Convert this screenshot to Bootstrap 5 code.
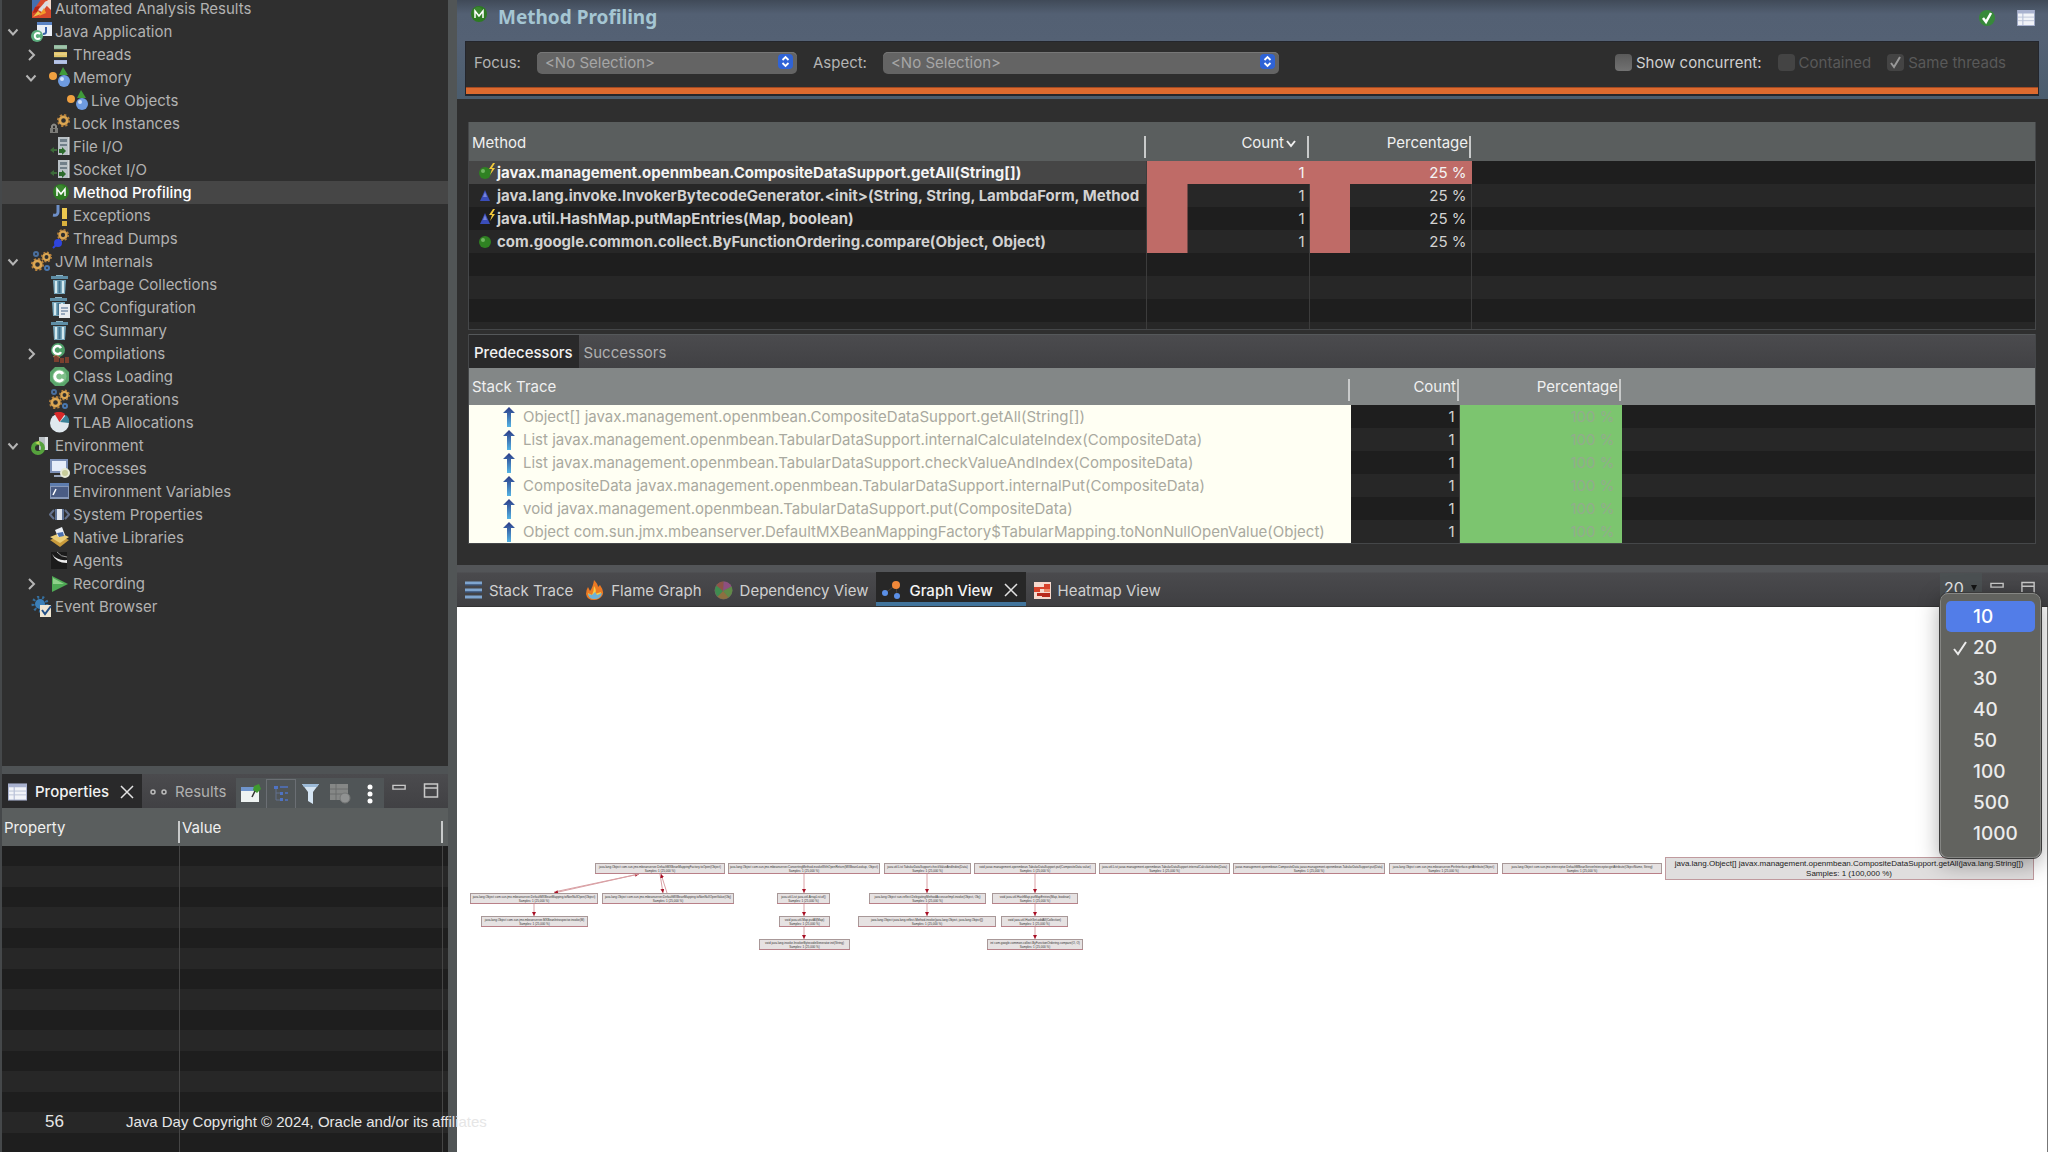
<!DOCTYPE html>
<html lang="en" data-bs-theme="dark">
<head>
<meta charset="utf-8">
<meta name="viewport" content="width=device-width, initial-scale=1">
<title>Method Profiling</title>
<link href="https://cdn.jsdelivr.net/npm/bootstrap@5.3.0/dist/css/bootstrap.min.css" rel="stylesheet">
<style>
  body { font-family: Inter, "Liberation Sans", sans-serif; font-size: 15px; line-height: 23px; background: #515556; color: #b4b4b4; }
  svg { display: block; flex: none; }
  a, a:hover { color: inherit; text-decoration: none; }
  button { background: none; border: 0; padding: 0; color: inherit; }
  .ico { width: 21px; height: 21px; }

  /* left column */
  .side { width: 457px; flex: none; border-right: 9px solid #515556; border-left: 2px solid #45484a; }
  .outline { background: #2f2f2f; overflow: hidden; }
  .outline ul { margin-top: -3px; }
  .tree-row { height: 23px; padding-left: 4px; color: #b2b2b2; }
  .tree-row .twist { width: 14px; height: 14px; margin-right: 11px; flex: none; }
  .tree-row .ico { margin-right: 3px; }
  .lv1 { padding-left: 22px; }
  .lv2 { padding-left: 40px; }
  .tree-row.current { background: #464646; color: #fff; font-weight: 500; }
  .props { height: 386px; flex: none; border-top: 8px solid #4f5355; }
  .viewbar { height: 34px; background: linear-gradient(#4b4b4e, #414144); }
  .viewtab { color: #b0b0b0; }
  .viewtab.on { background: #29292a; color: #f2f2f2; font-weight: 500; }
  .props .viewtab { padding-top: 1px; }
  .props .viewtab.on { width: 140px; padding-left: 6px; }
  .props .tools { background: #505557; width: 148px; height: 31px; }
  .boxed { border: 1px solid #6b6f74; width: 30px; height: 30px; }

  /* tables */
  .sheet { --bs-table-bg: transparent; table-layout: fixed; margin: 0; color: #d2d2d2; }
  .sheet > :not(caption) > * > * { padding: 0 4px; border: 0; box-shadow: none; height: 23px; line-height: 23px; white-space: nowrap; overflow: hidden; color: inherit; }
  .sheet > thead > tr > th { font-weight: 400; color: #f0f0f0; background: linear-gradient(#c8caca, #c8caca) right 3px / 2px 22px no-repeat; }
  .sheet > thead > tr > th:last-child { background: none; }
  .sheet > tbody > tr > td { border-right: 1px solid #3c3c3c; }
  .sheet > tbody > tr > td:last-child { border-right: 0; }
  .sheet > tbody > tr:nth-child(odd) { background: #1e1e1e; }
  .sheet > tbody > tr:nth-child(even) { background: #272727; }
  .frame-box { border: 1px solid #454749; border-top: 0; }
  .methods > thead { background: #5a5e5e; }
  .methods > thead > tr > th { height: 39px; line-height: 37px; padding: 2px 3px 0; background-position: right 14px; }
  .methods > tbody > tr > td:first-child { font-weight: 700; padding-left: 10px; padding-right: 0; }
  .methods > tbody > tr.sel > td:first-child { background: #464646; color: #f4f4f4; }
  .methods > tbody > tr.part > td { height: 7px; line-height: 7px; }
  .methods td.share { background: linear-gradient(#bf6b67, #bf6b67) left / 25% 100% no-repeat; }
  .methods tr.sel td.share { background-size: 100% 100%; border-color: #bf6b67; color: #f4f4f4; }
  .traces > thead { background: #838787; }
  .traces > thead > tr > th { height: 37px; line-height: 37px; padding: 0 3px; background-position: right 11px; }
  .traces td.call { background: #fffff3; color: #a9a99f; padding-left: 34px; border-color: #fffff3; }
  .traces td.full { background: #7cc56f; color: #93ac8d; border-color: #7cc56f; padding-right: 6px; }

  .props .sheet > thead { background: #5a5e5e; }
  .props .sheet > thead > tr > th { height: 38px; line-height: 36px; padding: 2px 3px 0 2px; background-position: right 13px; }
  .stripes { background: repeating-linear-gradient(#1e1e1e 0 20px, #272727 20px 41px); }
  .stripes div { border-right: 1px solid #454545; }
  .c-prop { width: 178px; }
  .c-val { width: 263px; }

  /* form header */
  .formhead { background: linear-gradient(#404a58, #536073 14px, #546174 41px, #4b5d6e); padding: 0 9px 3px 8px; height: 99px; flex: none; }
  .formhead h1 { font: 700 19px/34px "Noto Sans", "Open Sans", sans-serif; color: #a5c6d3; margin: 0; }
  .titlebar { height: 41px; }
  .filterbar { background: #2e2e2e; height: 55px; border: 1px solid #24262c; border-width: 1px 1px 2px; }
  .accent-line { height: 7px; background: #dc6a2f; border-top: 1px solid #a34a22; }
  .pick { appearance: none; height: 22px; border: 0; border-radius: 5px; background: #646464; color: #a6a6a6; padding: 0 8px; line-height: 22px; box-shadow: 0 1px #777 inset; }
  .pick-wrap { position: relative; }
  .pick-wrap svg { position: absolute; right: 3px; top: 3px; pointer-events: none; }
  .w-focus { width: 260px; }
  .w-aspect { width: 396px; }
  .tick { appearance: none; width: 17px; height: 17px; border-radius: 4px; background: linear-gradient(#5a5a5a, #727272); margin: 0; }
  .tick:disabled { background: #444; }
  .tick:checked { background: #444 url("data:image/svg+xml,%3Csvg xmlns='http://www.w3.org/2000/svg' viewBox='0 0 17 17'%3E%3Cpath d='M4 9l3 4 6-10' fill='none' stroke='%23999' stroke-width='2'/%3E%3C/svg%3E") no-repeat; }
  .lit { color: #d0d0d0; }
  .dim { color: #595959; }

  .page-area { background: #2f2f2f; padding: 23px 12px 21px 11px; flex: none; }
  .folder { margin-top: 4px; }
  .folder .viewbar { border-top: 1px solid #55585a; }
  .folder .viewtab { padding: 1px 6px 0 5px; line-height: 33px; }

  /* bottom part */
  .lowbar { height: 42px; flex: none; background: linear-gradient(#535558 0 7px, #4a4a4d 8px, #3f3f42); border-bottom: 1px solid #333; }
  .lowtab { height: 34px; color: #d0d0d0; gap: 7px; padding-top: 2px; }
  .lowtab.on { background: #272727; color: #f4f4f4; font-weight: 500; box-shadow: inset 0 -4px #41749c; padding: 2px 8px 0 6px; }
  .canvas { background: #fff; border-right: 1px solid #777; min-height: 0; }
  .depth { width: 42px; height: 30px; background: #4b5052; color: #e6e6e6; line-height: 30px; font-size: 16px; }
  .depth-menu { position: absolute; right: 7px; top: 28px; z-index: 5; width: 101px; padding: 7px 5px 8px; background: #62635f; border: 1px solid #858683; outline: 1px solid #3a3a3a; border-radius: 8px; box-shadow: 0 6px 22px rgba(0,0,0,.35); }
  .depth-menu button { display: flex; align-items: center; width: 100%; height: 31px; border-radius: 5px; color: #ececec; font-size: 19px; font-weight: 500; padding-left: 6px; }
  .depth-menu button svg, .depth-menu button i { width: 16px; margin-right: 5px; }
  .depth-menu button.hot { background: #527de8; color: #fff; }

  .slide-foot { position: absolute; left: 45px; bottom: 17px; z-index: 6; gap: 62px; font: 15px/26px "Liberation Sans", Arial, sans-serif; color: #e6e6e6; }
  .slide-foot b { font-weight: 400; font-size: 17px; }
</style>
</head>
<body class="vh-100 overflow-hidden d-flex position-relative">

<svg width="0" height="0" class="position-absolute">
  <defs>
    <symbol id="open" viewBox="0 0 14 14"><path d="M2.500 4.500l4.500 5 4.500-5" fill="none" stroke="#b5b5b5" stroke-width="2"/></symbol>
    <symbol id="sort" viewBox="0 0 12 14"><path d="M2 5l4 5 4-5" fill="none" stroke="#f0f0f0" stroke-width="2"/></symbol>
    <symbol id="shut" viewBox="0 0 14 14"><path d="M5 2l5 5-5 5" fill="none" stroke="#b5b5b5" stroke-width="2"/></symbol>
    <symbol id="auto" viewBox="0 0 21 21"><path d="M1 0h19v20H1z" fill="#d8492c"/><path d="M1 0h10L1 14z" fill="#456fb0"/><path d="M13 5l7-5v12z" fill="#f4d9c9"/><path d="M7 12L15 3l3 2-7 9z" fill="#d9dde2"/><path d="M4 9l5-1-3 6-4 1z" fill="#b32317"/><path d="M8 18l5-8 2 5z" fill="#f59a2a"/><path d="M2 19l5-6 3 3z" fill="#f0c34a"/></symbol>
    <symbol id="japp" viewBox="0 0 21 21"><path d="M6 1h15v14H6z" fill="#e9eef6"/><path d="M6 1h15v3H6z" fill="#5a83c4"/><path d="M15 6v5q0 2-3 2" fill="none" stroke="#3a62a8" stroke-width="2"/><circle cx="6" cy="15" r="6" fill="#5cae7e"/><path d="M9 13a3 3 0 1 0 0 4" fill="none" stroke="#fff" stroke-width="2"/></symbol>
    <symbol id="threads" viewBox="0 0 21 21"><path d="M5 1h13v4H5z" fill="#8db79a"/><path d="M5 8h13v5H5z" fill="#e3c66a"/><path d="M5 16h13v4H5z" fill="#a9b9e0"/><path d="M5 5h13v1H5zM5 13h13v1H5z" fill="#4a5040"/><path d="M5 3h13M5 10h13M5 18h13" stroke="#fff" opacity=".35"/></symbol>
    <symbol id="memory" viewBox="0 0 21 21"><circle cx="4" cy="9" r="4" fill="#f0a040"/><path d="M14 0l5 8h-9z" fill="#3f9a3a"/><circle cx="15" cy="14" r="6" fill="#6e9be0"/><circle cx="13" cy="12" r="2" fill="#cfe0fa"/></symbol>
    <symbol id="cog" viewBox="0 0 14 14"><circle cx="7" cy="7" r="4" fill="none" stroke="#dba753" stroke-width="3"/><circle cx="7" cy="7" r="6" fill="none" stroke="#b9833c" stroke-width="2" stroke-dasharray="2.400 2.300"/></symbol>
    <symbol id="lock" viewBox="0 0 21 21"><use href="#cog" x="8" y="1" width="13" height="13"/><path d="M1 15h8v5H1z" fill="#7c7c78"/><path d="M3 15v-2q2-3 4 0v2" fill="none" stroke="#8a8a86" stroke-width="2"/><path d="M4 16h2v3H4z" fill="#333"/></symbol>
    <symbol id="io" viewBox="0 0 21 21"><path d="M9 1h11v18H9z" fill="#b9c1c6"/><path d="M11 3h7v3h-7zM11 8h7v2h-7z" fill="#71808a"/><path d="M20 1v18" stroke="#e8e8e8"/><path d="M1 14l4-3v2h3v2H5v2z" fill="#3d6b3a"/><path d="M17 15l-4-4v2h-3v4h3v2z" fill="#2c6a2c"/></symbol>
    <symbol id="mball" viewBox="0 0 21 21"><circle cx="12" cy="10" r="8" fill="#2d7b22"/><circle cx="11" cy="8" r="5" fill="#4b9440" opacity=".5"/><path d="M8 14V7l4 5 4-5v7" fill="none" stroke="#fff" stroke-width="1.500"/></symbol>
    <symbol id="exc" viewBox="0 0 21 21"><path d="M9 0v7q0 4-5 3" fill="none" stroke="#6d8fc8" stroke-width="3"/><path d="M13 3h5v11h-5z" fill="#edc94f"/><path d="M13 16h5v5h-5z" fill="#d9b13d"/></symbol>
    <symbol id="dumps" viewBox="0 0 21 21"><use href="#cog" x="8" y="1" width="12" height="12"/><circle cx="9" cy="15" r="4" fill="#2f45dd"/><path d="M4 20l4-4" stroke="#2f45dd" stroke-width="2"/></symbol>
    <symbol id="gears" viewBox="0 0 21 21"><use href="#cog" x="10" y="0" width="11" height="12"/><use href="#cog" x="0" y="7" width="13" height="13"/><circle cx="5" cy="3" r="2" fill="none" stroke="#4a6f9e" stroke-width="2"/><circle cx="16" cy="17" r="2" fill="none" stroke="#4a78b0" stroke-width="2"/></symbol>
    <symbol id="bin" viewBox="0 0 21 21"><path d="M2 2h17v3H2z" fill="#5e8ea6"/><path d="M7 1h7v1H7z" fill="#8fb6c6"/><path d="M4 6h13l-1 14H5z" fill="#76a5ba"/><path d="M7 7v12M14 7v12" stroke="#d3e8ee" stroke-width="2"/><path d="M10.500 7v12" stroke="#3e6f8c" stroke-width="2"/></symbol>
    <symbol id="binpage" viewBox="0 0 21 21"><use href="#bin" x="-1" y="-1" width="21" height="21"/><path d="M10 7h11v14H10z" fill="#e9ecef"/><path d="M12 11h7M12 14h7M12 17h4" stroke="#7d93ad" stroke-width="1.500"/></symbol>
    <symbol id="comp" viewBox="0 0 21 21"><circle cx="9" cy="7" r="7" fill="#4f9f68"/><path d="M12 5a4 4 0 1 0 0 4" fill="none" stroke="#fff" stroke-width="2.500"/><path d="M5 13h5v6H5zM11 15h4v5h-4zM16 14h4v6h-4z" fill="#7c3f2e"/><path d="M4 14l3-2 4 3" stroke="#b07a4e" fill="none"/></symbol>
    <symbol id="cls" viewBox="0 0 21 21"><path d="M6 1h9l5 5v9l-5 5H6l-5-5V6z" fill="#5aa56b"/><circle cx="10.500" cy="10.500" r="7" fill="#7fbf8a"/><path d="M14 8a4.500 4.500 0 1 0 0 5" fill="none" stroke="#fff" stroke-width="3"/></symbol>
    <symbol id="pie" viewBox="0 0 21 21"><circle cx="10.500" cy="11" r="9.500" fill="#dfe8ee"/><path d="M10.500 10L5 1q6-3 11 1z" fill="#d92a2a"/><path d="M11 10l6-7q4 3 3 8z" fill="#3a8298"/></symbol>
    <symbol id="env" viewBox="0 0 21 21"><path d="M8 2h9v13H8z" fill="#b8bfc4"/><path d="M14 2h3v13h-3z" fill="#dfe3e6"/><circle cx="7" cy="13" r="5" fill="none" stroke="#56a23d" stroke-width="4"/><path d="M4 8l4-2 1 4z" fill="#b9d25a"/></symbol>
    <symbol id="proc" viewBox="0 0 21 21"><path d="M1 1h18v14H1z" fill="#7c90b8"/><path d="M3 3h14v10H3z" fill="#e6edfa"/><path d="M5 17h10v2H5z" fill="#9aa7bd"/><circle cx="16" cy="15" r="4" fill="#c9ce9b" stroke="#e8ebd6" stroke-width="2"/></symbol>
    <symbol id="vars" viewBox="0 0 21 21"><path d="M1 2h19v16H1z" fill="#8798b8"/><path d="M2 6h17v10H2z" fill="#4a5c84"/><path d="M4 14l3-6" stroke="#fff" stroke-width="1.500"/><path d="M1 2h19v3H1z" fill="#5d7cae"/></symbol>
    <symbol id="sysp" viewBox="0 0 21 21"><path d="M5 6l-4 4.500L5 15M16 6l4 4.500-4 4.500" fill="none" stroke="#62708c" stroke-width="2"/><path d="M6 5h9v11H6z" fill="#5f7396"/><path d="M8 5h5v11H8z" fill="#e3e8f0"/></symbol>
    <symbol id="libs" viewBox="0 0 21 21"><path d="M1 13l10-4 9 4-9 7z" fill="#c99b3c"/><path d="M1 10l10-4 9 4-9 6z" fill="#ebce78"/><path d="M6 3l7-3 3 8-7 2z" fill="#edf1f7"/><path d="M8 6l6-1 1 4-5 1z" fill="#4a70b0"/></symbol>
    <symbol id="agent" viewBox="0 0 21 21"><path d="M2 2h16v17H2z" fill="#1b1b1b"/><path d="M3 4q4 9 15 9v-3Q8 11 3 4z" fill="#eee"/><path d="M8 2q4 5 10 5" stroke="#999" fill="none"/></symbol>
    <symbol id="rec" viewBox="0 0 21 21"><path d="M3 3l16 8-16 8z" fill="#4faa55"/><path d="M4 5l11 6H4z" fill="#8fd08a"/></symbol>
    <symbol id="evt" viewBox="0 0 21 21"><circle cx="9" cy="8" r="5" fill="#3b7fb8"/><circle cx="9" cy="8" r="7" fill="none" stroke="#356f9f" stroke-width="3" stroke-dasharray="2 3"/><path d="M9 9h11v12H9z" fill="#efe6d3"/><path d="M11 14l3 4 6-8" fill="none" stroke="#234f86" stroke-width="2"/></symbol>
    <symbol id="ball" viewBox="0 0 21 21"><circle cx="9" cy="11" r="6" fill="#2f8122"/><circle cx="7" cy="9" r="2" fill="#6fb560"/></symbol>
    <symbol id="tri" viewBox="0 0 21 21"><path d="M9 5l5 11H4z" fill="#3a4dba"/><path d="M9 7l2 5H7z" fill="#7684da"/></symbol>
    <symbol id="bolt" viewBox="0 0 21 21"><path d="M17 1l-4 6h3l-2 6 5-7h-3l3-5z" fill="#f2c93a"/></symbol>
    <symbol id="cross" viewBox="0 0 14 14"><path d="M1 1l12 12M13 1L1 13" stroke="#e2e2e2" stroke-width="1.500"/></symbol>
    <symbol id="mini" viewBox="0 0 16 16"><path d="M1 2h13v4H1z" fill="none" stroke="#c9c9c9" stroke-width="1.500"/></symbol>
    <symbol id="maxi" viewBox="0 0 16 16"><path d="M1 1h13v13H1zM1 5h13" fill="none" stroke="#c9c9c9" stroke-width="1.500"/></symbol>
    <symbol id="grid" viewBox="0 0 20 18"><path d="M0 0h20v18H0z" fill="#a9b2cf"/><path d="M1 4h5v13H1zM7 4h12v13H7z" fill="#f1f3f8"/><path d="M1 8h18M1 12h18" stroke="#b9c2d6"/></symbol>
    <linearGradient id="upg" x1="0" y1="0" x2="0" y2="1"><stop offset="0" stop-color="#2b3a86"/><stop offset="1" stop-color="#55b4e4"/></linearGradient>
    <symbol id="up" viewBox="0 0 12 20"><path d="M6 0l6 6H8v14H4V6H0z" fill="url(#upg)"/></symbol>
    <symbol id="steps" viewBox="0 0 16 16"><rect width="15" height="15" rx="4" fill="#2f63d6"/><path d="M4.500 6l3-3 3 3M4.500 9l3 3 3-3" fill="none" stroke="#fff" stroke-width="1.800"/></symbol>
  </defs>
</svg>

<aside class="side d-flex flex-column">
  <nav class="outline flex-grow-1" aria-label="Outline">
    <ul class="list-unstyled mb-0" id="outline"></ul>
  </nav>
  <section class="props d-flex flex-column">
    <div class="viewbar d-flex align-items-stretch">
      <div class="viewtab on d-flex align-items-center">
        <svg width="19" height="18"><use href="#grid"/></svg>
        <a href="#" class="ms-2 me-auto">Properties</a>
        <button aria-label="Close Properties" class="me-2"><svg width="14" height="14"><use href="#cross"/></svg></button>
      </div>
      <div class="viewtab d-flex align-items-center ps-2 me-auto">
        <svg width="17" height="8" viewBox="0 0 17 8"><circle cx="3" cy="4" r="2" fill="none" stroke="#bbb" stroke-width="1.500"/><circle cx="14" cy="4" r="2" fill="none" stroke="#bbb" stroke-width="1.500"/></svg>
        <a href="#" class="ms-2">Results</a>
      </div>
      <div class="tools d-flex align-items-center mt-1 ps-1">
        <button aria-label="Pin"><svg width="22" height="22" viewBox="0 0 22 22"><path d="M1 4h18v15H1z" fill="#eef3f2"/><path d="M1 4h18v4H1z" fill="#6f95cc"/><path d="M14 3l5-2 2 5-4 4-4-3z" fill="#3f9a2f"/><path d="M15 8l-3 6" stroke="#333" stroke-width="1.500"/></svg></button>
        <button aria-label="Categories" class="boxed d-flex align-items-center justify-content-center ms-1"><svg width="18" height="18" viewBox="0 0 18 18"><path d="M4 3v12M4 8h5M4 15h5" stroke="#60708f" fill="none"/><path d="M2 1h4v3H2zM8 7h3v3H8zM8 13h3v3H8z" fill="#4f73c4"/><path d="M8 2h8M13 8h3M13 15h3" stroke="#4f73c4" stroke-width="1.500"/></svg></button>
        <button aria-label="Filter" class="ms-1"><svg width="21" height="22" viewBox="0 0 21 22"><path d="M2 1h17l-6 8v12l-5-3V9z" fill="#d5e5f3"/><path d="M2 1h17l-2 3H4z" fill="#9dbbd8"/></svg></button>
        <button aria-label="Restore defaults" class="ms-2"><svg width="22" height="21" viewBox="0 0 22 21"><path d="M1 1h18v16H1z" fill="#858786"/><path d="M1 6h18M1 11h18M7 1v16" stroke="#6b6d6d"/><circle cx="16" cy="15" r="5" fill="#909292" stroke="#747676"/></svg></button>
        <button aria-label="View menu" class="ms-3"><svg width="6" height="22" viewBox="0 0 6 22"><circle cx="3" cy="4" r="2.500" fill="#fff"/><circle cx="3" cy="11" r="2.500" fill="#fff"/><circle cx="3" cy="18" r="2.500" fill="#fff"/></svg></button>
      </div>
      <div class="d-flex align-items-center ps-2 pe-2 gap-3">
        <button aria-label="Minimize"><svg width="15" height="16"><use href="#mini"/></svg></button>
        <button aria-label="Maximize"><svg width="17" height="16"><use href="#maxi"/></svg></button>
      </div>
    </div>
    <table class="table sheet">
      <colgroup><col class="c-prop"><col class="c-val"><col></colgroup>
      <thead><tr><th scope="col">Property</th><th scope="col">Value</th><th></th></tr></thead>
    </table>
    <div class="stripes d-flex flex-grow-1"><div class="c-prop"></div><div class="c-val"></div></div>
  </section>
</aside>

<main class="flex-grow-1 d-flex flex-column overflow-hidden">
  <header class="formhead">
    <div class="titlebar d-flex align-items-start">
      <svg class="ico ms-1 mt-1" width="21" height="21" viewBox="2 0 21 21"><use href="#mball" width="21" height="21"/></svg>
      <h1 class="ms-1 ps-1 me-auto">Method Profiling</h1>
      <div class="d-flex align-items-center pt-2 gap-3">
        <svg width="20" height="20" viewBox="0 0 20 20"><circle cx="10" cy="10" r="8" fill="#37893a"/><path d="M6 10l3 4 5-9" fill="none" stroke="#fff" stroke-width="2.500"/></svg>
        <button aria-label="Table settings" class="ms-1 me-1"><svg width="18" height="16"><use href="#grid"/></svg></button>
      </div>
    </div>
    <div class="filterbar d-flex flex-column">
      <div class="d-flex align-items-center flex-grow-1 px-2 pb-1">
        <label for="focus" class="me-3">Focus:</label>
        <div class="pick-wrap me-3"><select id="focus" class="pick w-focus"><option>&lt;No Selection&gt;</option></select><svg width="16" height="16"><use href="#steps"/></svg></div>
        <label for="aspect" class="me-3">Aspect:</label>
        <div class="pick-wrap me-auto"><select id="aspect" class="pick w-aspect"><option>&lt;No Selection&gt;</option></select><svg width="16" height="16"><use href="#steps"/></svg></div>
        <div class="d-flex align-items-center gap-3 pe-4">
          <span class="d-flex align-items-center lit"><input type="checkbox" class="tick me-1" id="conc"><label for="conc">Show concurrent:</label></span>
          <span class="d-flex align-items-center dim"><input type="checkbox" class="tick me-1" id="cont" disabled><label for="cont">Contained</label></span>
          <span class="d-flex align-items-center dim"><input type="checkbox" class="tick me-1" id="same" disabled checked><label for="same">Same threads</label></span>
        </div>
      </div>
      <div class="accent-line"></div>
    </div>
  </header>

  <section class="page-area">
    <div class="frame-box">
      <table class="table sheet methods">
        <colgroup><col style="width:677px"><col style="width:163px"><col style="width:162px"><col></colgroup>
        <thead><tr><th scope="col">Method</th><th scope="col" class="text-end"><span class="d-inline-flex align-items-center">Count<svg class="me-2" width="14" height="14"><use href="#sort"/></svg></span></th><th scope="col" class="text-end">Percentage</th><th></th></tr></thead>
        <tbody>
          <tr class="sel"><td><span class="d-flex align-items-center"><svg width="18" height="21" viewBox="3 0 18 21"><use href="#ball" width="21" height="21"/><use href="#bolt" width="21" height="21"/></svg>javax.management.openmbean.CompositeDataSupport.getAll(String[])</span></td><td class="share text-end">1</td><td class="share text-end">25 %</td><td></td></tr>
          <tr><td><span class="d-flex align-items-center"><svg width="18" height="21" viewBox="3 0 18 21"><use href="#tri" width="21" height="21"/></svg>java.lang.invoke.InvokerBytecodeGenerator.&lt;init&gt;(String, String, LambdaForm, Method</span></td><td class="share text-end">1</td><td class="share text-end">25 %</td><td></td></tr>
          <tr><td><span class="d-flex align-items-center"><svg width="18" height="21" viewBox="3 0 18 21"><use href="#tri" width="21" height="21"/><use href="#bolt" width="21" height="21"/></svg>java.util.HashMap.putMapEntries(Map, boolean)</span></td><td class="share text-end">1</td><td class="share text-end">25 %</td><td></td></tr>
          <tr><td><span class="d-flex align-items-center"><svg width="18" height="21" viewBox="3 0 18 21"><use href="#ball" width="21" height="21"/></svg>com.google.common.collect.ByFunctionOrdering.compare(Object, Object)</span></td><td class="share text-end">1</td><td class="share text-end">25 %</td><td></td></tr>
          <tr><td></td><td></td><td></td><td></td></tr>
          <tr><td></td><td></td><td></td><td></td></tr>
          <tr><td></td><td></td><td></td><td></td></tr>
          <tr class="part"><td></td><td></td><td></td><td></td></tr>
        </tbody>
      </table>
    </div>
    <div class="folder frame-box">
      <div class="viewbar d-flex">
        <a href="#" class="viewtab on">Predecessors</a>
        <a href="#" class="viewtab">Successors</a>
      </div>
      <table class="table sheet traces">
        <colgroup><col style="width:881px"><col style="width:109px"><col style="width:162px"><col></colgroup>
        <thead><tr><th scope="col">Stack Trace</th><th scope="col" class="text-end">Count</th><th scope="col" class="text-end">Percentage</th><th></th></tr></thead>
        <tbody id="traces"></tbody>
      </table>
    </div>
  </section>

  <section class="d-flex flex-column flex-grow-1 position-relative">
    <div class="lowbar d-flex align-items-end ps-2 gap-2">
      <a href="#" class="lowtab d-flex align-items-center me-1"><svg width="17" height="18" viewBox="0 0 17 18"><path d="M0 2h17M0 9h17M0 16h17" stroke="#7fa5cf" stroke-width="3"/><path d="M0 4h17M0 11h17" stroke="#37598a"/></svg>Stack Trace</a>
      <a href="#" class="lowtab d-flex align-items-center me-1"><svg width="19" height="20" viewBox="0 0 19 20"><path d="M9 0q4 4 4 7l2-2q5 7 2 11-3 4-8 4-7 0-8-6 0-4 2-7l2 4q3-4 4-11z" fill="#ec7a24"/><path d="M9 6q3 4 1 8l6-2q0 7-7 7-6-1-6-6l4 2q2-4 2-9z" fill="#f8cf45"/><path d="M3 14l4 1 3-3 2 3 5-2q-1 6-8 6-5 0-6-5z" fill="#6fb1d8"/></svg>Flame Graph</a>
      <a href="#" class="lowtab d-flex align-items-center"><svg width="19" height="19" viewBox="0 0 19 19"><circle cx="9.500" cy="9.500" r="9" fill="#6d6a5e"/><path d="M9.500.500a9 9 0 0 1 8 5L9 10z" fill="#8e4f80"/><path d="M17.500 5.500a9 9 0 0 1-3 11L9 10z" fill="#5f8a48"/><path d="M14.500 16.500a9 9 0 0 1-11-1L9 10z" fill="#8d7040"/><path d="M3.500 15.500a9 9 0 0 1-1-11L9 10z" fill="#3f8c50"/><path d="M2.500 4.500a9 9 0 0 1 7-4L9 10z" fill="#8f5348"/></svg>Dependency View</a>
      <div class="lowtab on d-flex align-items-center"><svg width="20" height="19" viewBox="0 0 20 19"><path d="M3 12l11-8 1 11" fill="none" stroke="#4a4035"/><circle cx="14" cy="4" r="4" fill="#f0883a"/><circle cx="3" cy="12" r="3" fill="#5b8fe6"/><circle cx="15" cy="15" r="3" fill="#5b8fe6"/></svg><a href="#">Graph View</a><button aria-label="Close Graph View" class="ms-1"><svg width="14" height="14"><use href="#cross"/></svg></button></div>
      <a href="#" class="lowtab d-flex align-items-center me-auto"><svg width="17" height="17" viewBox="0 0 17 17"><path d="M0 0h17v17H0z" fill="#f6d9cd"/><path d="M0 5h10V2h6v5H6v3H0z" fill="#d8432b"/><path d="M3 11h13v4H8v-1H3z" fill="#b82a1c"/><path d="M10 7h6v3h-6z" fill="#ef8a68"/></svg>Heatmap View</a>
      <button class="depth align-self-start mt-2 d-flex ps-1" aria-expanded="true" aria-haspopup="menu">20<svg class="ms-auto me-1 mt-2" width="8" height="14" viewBox="0 0 8 14"><path d="M1 4h6l-3 6z" fill="#141414"/></svg></button>
      <button aria-label="Minimize part" class="align-self-start mt-3"><svg width="15" height="16"><use href="#mini"/></svg></button>
      <button aria-label="Maximize part" class="align-self-start mt-3 ms-2 me-2"><svg class="me-1" width="15" height="16"><use href="#maxi"/></svg></button>
    </div>
    <div class="depth-menu" role="menu">
      <button class="hot" role="menuitem"><i></i>10</button>
      <button role="menuitem"><svg height="16" viewBox="0 0 16 16"><path d="M2 9l4 5 8-12" fill="none" stroke="#ececec" stroke-width="2"/></svg>20</button>
      <button role="menuitem"><i></i>30</button>
      <button role="menuitem"><i></i>40</button>
      <button role="menuitem"><i></i>50</button>
      <button role="menuitem"><i></i>100</button>
      <button role="menuitem"><i></i>500</button>
      <button role="menuitem"><i></i>1000</button>
    </div>
    <div class="canvas flex-grow-1">
      <svg id="graph" width="100%" height="100%" font-family="Liberation Sans, Arial, sans-serif" text-anchor="middle">
        <defs><marker id="tip" viewBox="0 0 6 6" refX="6" refY="3" markerWidth="4" markerHeight="4" orient="auto" markerUnits="userSpaceOnUse"><path d="M0 0l6 3-6 3z" fill="#a80f24"/></marker></defs>
      </svg>
    </div>
  </section>
</main>

<footer class="slide-foot d-flex align-items-center"><b>56</b><span>Java Day Copyright © 2024, Oracle and/or its affiliates</span></footer>

<script src="https://cdn.jsdelivr.net/npm/bootstrap@5.3.0/dist/js/bootstrap.bundle.min.js"></script>
<script>
  // outline tree: level, twistie, icon, label
  const items = [
    [0, '', 'auto', 'Automated Analysis Results'], [0, 'open', 'japp', 'Java Application'],
    [1, 'shut', 'threads', 'Threads'], [1, 'open', 'memory', 'Memory'], [2, '', 'memory', 'Live Objects'],
    [1, '', 'lock', 'Lock Instances'], [1, '', 'io', 'File I/O'], [1, '', 'io', 'Socket I/O'],
    [1, '', 'mball', 'Method Profiling'], [1, '', 'exc', 'Exceptions'], [1, '', 'dumps', 'Thread Dumps'],
    [0, 'open', 'gears', 'JVM Internals'], [1, '', 'bin', 'Garbage Collections'], [1, '', 'binpage', 'GC Configuration'],
    [1, '', 'bin', 'GC Summary'], [1, 'shut', 'comp', 'Compilations'], [1, '', 'cls', 'Class Loading'],
    [1, '', 'gears', 'VM Operations'], [1, '', 'pie', 'TLAB Allocations'], [0, 'open', 'env', 'Environment'],
    [1, '', 'proc', 'Processes'], [1, '', 'vars', 'Environment Variables'], [1, '', 'sysp', 'System Properties'],
    [1, '', 'libs', 'Native Libraries'], [1, '', 'agent', 'Agents'], [1, 'shut', 'rec', 'Recording'],
    [0, '', 'evt', 'Event Browser']
  ];
  document.getElementById('outline').innerHTML = items.map(([lv, tw, ic, label]) =>
    `<li><a href="#" class="tree-row lv${lv} d-flex align-items-center${label === 'Method Profiling' ? ' current' : ''}">` +
    `<svg class="twist">${tw ? `<use href="#${tw}"/>` : ''}</svg><svg class="ico"><use href="#${ic}"/></svg>${label}</a></li>`).join('');

  const frames = [
    'Object[] javax.management.openmbean.CompositeDataSupport.getAll(String[])',
    'List javax.management.openmbean.TabularDataSupport.internalCalculateIndex(CompositeData)',
    'List javax.management.openmbean.TabularDataSupport.checkValueAndIndex(CompositeData)',
    'CompositeData javax.management.openmbean.TabularDataSupport.internalPut(CompositeData)',
    'void javax.management.openmbean.TabularDataSupport.put(CompositeData)',
    'Object com.sun.jmx.mbeanserver.DefaultMXBeanMappingFactory$TabularMapping.toNonNullOpenValue(Object)'
  ];
  document.getElementById('traces').innerHTML = frames.map(f =>
    `<tr><td class="call"><span class="d-flex align-items-center"><svg class="me-2" width="12" height="20"><use href="#up"/></svg>${f}</span></td>` +
    `<td class="text-end">1</td><td class="full text-end">100 %</td><td></td></tr>`).join('');

  // call graph: x, y, width, label
  const nodes = [
    [138, 256, 130, 'java.lang.Object com.sun.jmx.mbeanserver.DefaultMXBeanMappingFactory.toOpen(Object)'],
    [271, 256, 152, 'java.lang.Object com.sun.jmx.mbeanserver.ConvertingMethod.invokeWithOpenReturn(MXBeanLookup, Object)'],
    [427, 256, 87, 'java.util.List TabularDataSupport.checkValueAndIndex(Data)'],
    [517, 256, 122, 'void javax.management.openmbean.TabularDataSupport.put(CompositeData value)'],
    [642, 256, 131, 'java.util.List javax.management.openmbean.TabularDataSupport.internalCalculateIndex(Data)'],
    [776, 256, 152, 'javax.management.openmbean.CompositeData javax.management.openmbean.TabularDataSupport.put(Data)'],
    [932, 256, 109, 'java.lang.Object com.sun.jmx.mbeanserver.PerInterface.getAttribute(Object)'],
    [1045, 256, 160, 'java.lang.Object com.sun.jmx.interceptor.DefaultMBeanServerInterceptor.getAttribute(ObjectName, String)'],
    [13, 286, 128, 'java.lang.Object com.sun.jmx.mbeanserver.DefaultMXBeanMapping.toNonNullOpen(Object)'],
    [145, 286, 132, 'java.lang.Object com.sun.jmx.mbeanserver.DefaultMXBeanMapping.toNonNullOpenValue(Obj)'],
    [320, 286, 53, 'java.util.List java.util.ArrayList.of()'],
    [412, 286, 117, 'java.lang.Object sun.reflect.DelegatingMethodAccessorImpl.invoke(Object, Obj)'],
    [535, 286, 86, 'void java.util.HashMap.putMapEntries(Map, boolean)'],
    [24, 309, 107, 'java.lang.Object com.sun.jmx.mbeanserver.MXBeanIntrospector.invoke(M)'],
    [322, 309, 51, 'void java.util.Map.putAll(Map)'],
    [401, 309, 138, 'java.lang.Object java.lang.reflect.Method.invoke(java.lang.Object, java.lang.Object[])'],
    [544, 309, 67, 'void java.util.HashSet.addAll(Collection)'],
    [302, 332, 91, 'void java.lang.invoke.InvokerBytecodeGenerator.init(String)'],
    [530, 332, 96, 'int com.google.common.collect.ByFunctionOrdering.compare(O, O)']
  ];
  const edges = [[97, 285, 182, 267], [182, 267, 97, 286], [203, 267, 206, 286], [210, 286, 204, 267], [77, 297, 77, 309],
    [347, 267, 347, 286], [347, 297, 347, 309], [347, 320, 347, 332], [470, 267, 470, 286], [470, 297, 470, 309],
    [578, 267, 578, 286], [578, 297, 578, 309], [578, 320, 578, 332]];
  let out = '';
  for (const [a, b, c, d] of edges) out += `<path d="M${a} ${b}L${c} ${d}" stroke="#d9a0a4" marker-end="url(#tip)"/>`;
  for (const [x, y, w, t] of nodes) {
    const m = x + w / 2;
    out += `<rect x="${x}.5" y="${y}.5" width="${w - 1}" height="10" fill="#e6e2e2" stroke="#a89898"/><path d="M${x} ${y + 10.5}h${w}" stroke="#b98088"/>` +
      `<text x="${m}" y="${y + 5}" font-size="3" fill="#333">${t}</text><text x="${m}" y="${y + 9}" font-size="3" fill="#333">Samples: 1 (25,000 %)</text>`;
  }
  out += `<rect x="1208.5" y="250.5" width="368" height="22" fill="#e0dede" stroke="#c09a9e"/>` +
    `<text x="1392" y="259" font-size="8" fill="#1c1c1c">java.lang.Object[] javax.management.openmbean.CompositeDataSupport.getAll(java.lang.String[])</text>` +
    `<text x="1392" y="269" font-size="8" fill="#1c1c1c">Samples: 1 (100,000 %)</text>`;
  document.getElementById('graph').insertAdjacentHTML('beforeend', out);
</script>
</body>
</html>
